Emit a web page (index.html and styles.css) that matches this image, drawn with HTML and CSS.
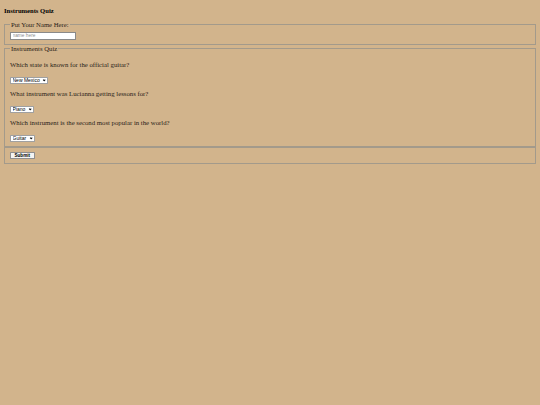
FILE: index.html
```html
<!DOCTYPE html>
<html>
<head>
<meta charset="utf-8">
<title>Instruments Quiz</title>
<link rel="stylesheet" href="styles.css">
</head>
<body>
<h1 class="title">Instruments Quiz</h1>
<form class="quiz-form">
  <fieldset class="box name-box">
    <legend class="box-legend">Put Your Name Here:</legend>
    <input class="name-input" type="text" placeholder="name here">
  </fieldset>
  <fieldset class="box quiz-box">
    <legend class="box-legend">Instruments Quiz</legend>
    <p class="question">Which state is known for the official guitar?</p>
    <span class="select-wrap">
      <select class="answer">
        <option>New Mexico</option>
        <option>Texas</option>
        <option>California</option>
      </select>
    </span>
    <p class="question">What instrument was Lucianna getting lessons for?</p>
    <span class="select-wrap">
      <select class="answer">
        <option>Piano</option>
        <option>Guitar</option>
        <option>Violin</option>
      </select>
    </span>
    <p class="question">Which instrument is the second most popular in the world?</p>
    <span class="select-wrap">
      <select class="answer">
        <option>Guitar</option>
        <option>Piano</option>
        <option>Drums</option>
      </select>
    </span>
  </fieldset>
  <fieldset class="box submit-box">
    <button class="submit-btn" type="submit">Submit</button>
  </fieldset>
</form>
</body>
</html>
```

FILE: styles.css
```css
html {
  background: #d2b48c;
}

body {
  margin: 4px;
  font-family: "Liberation Serif", "Times New Roman", serif;
  font-size: 6.75px;
  color: #1a1410;
}

.title {
  margin: 2.5px 0 7.5px;
  font-size: 6.6px;
  line-height: 7px;
  font-weight: bold;
  color: #000;
}

.quiz-form {
  margin: 0;
}

.box {
  margin: 0;
  border: 1px solid #a39a8b;
  padding: 0 5px;
  min-width: 0;
}

.box-legend {
  padding: 0 1px;
  font-size: 6.7px;
  line-height: 7px;
  color: #2a2218;
}

.name-box {
  padding-top: 3.5px;
  padding-bottom: 4.5px;
}

.name-input {
  display: block;
  box-sizing: border-box;
  width: 66px;
  height: 8px;
  margin: 0;
  padding: 0 1.5px;
  font-family: "Liberation Sans", Arial, sans-serif;
  font-size: 4.8px;
  background: #fff;
  border: 0.5px solid #8a8a8a;
  border-radius: 0;
  outline: none;
}

.name-input::placeholder {
  color: #8d8d8d;
}

.quiz-box {
  padding-top: 2px;
  padding-bottom: 4px;
}

.question {
  margin: 6.5px 0 0;
  line-height: 7px;
  color: #2a2218;
}

.question:first-of-type {
  margin-top: 7px;
}

.select-wrap {
  position: relative;
  display: flex;
  width: max-content;
  margin-top: 9px;
}

.select-wrap::after {
  content: "";
  position: absolute;
  right: 2.4px;
  top: 1.6px;
  width: 1.4px;
  height: 1.4px;
  border-right: 0.8px solid #111;
  border-bottom: 0.8px solid #111;
  transform: rotate(45deg);
  pointer-events: none;
}

.answer {
  appearance: none;
  -webkit-appearance: none;
  box-sizing: border-box;
  height: 6.5px;
  margin: 0;
  padding: 0 6.5px 0 1.5px;
  font-family: "Liberation Sans", Arial, sans-serif;
  font-size: 5px;
  line-height: 5.5px;
  color: #000;
  background: #fff;
  border: 0.5px solid #a0a0a0;
  border-radius: 0.6px;
}

.submit-box {
  padding-top: 4px;
  padding-bottom: 4px;
}

.submit-btn {
  display: block;
  box-sizing: border-box;
  height: 7px;
  width: 24.5px;
  margin: 0;
  padding: 0;
  font-family: "Liberation Sans", Arial, sans-serif;
  font-size: 4.6px;
  font-weight: bold;
  line-height: 5px;
  color: #000;
  background: #f4f4f4;
  border: 0.5px solid #8f8f8f;
  border-radius: 0.6px;
}
```
